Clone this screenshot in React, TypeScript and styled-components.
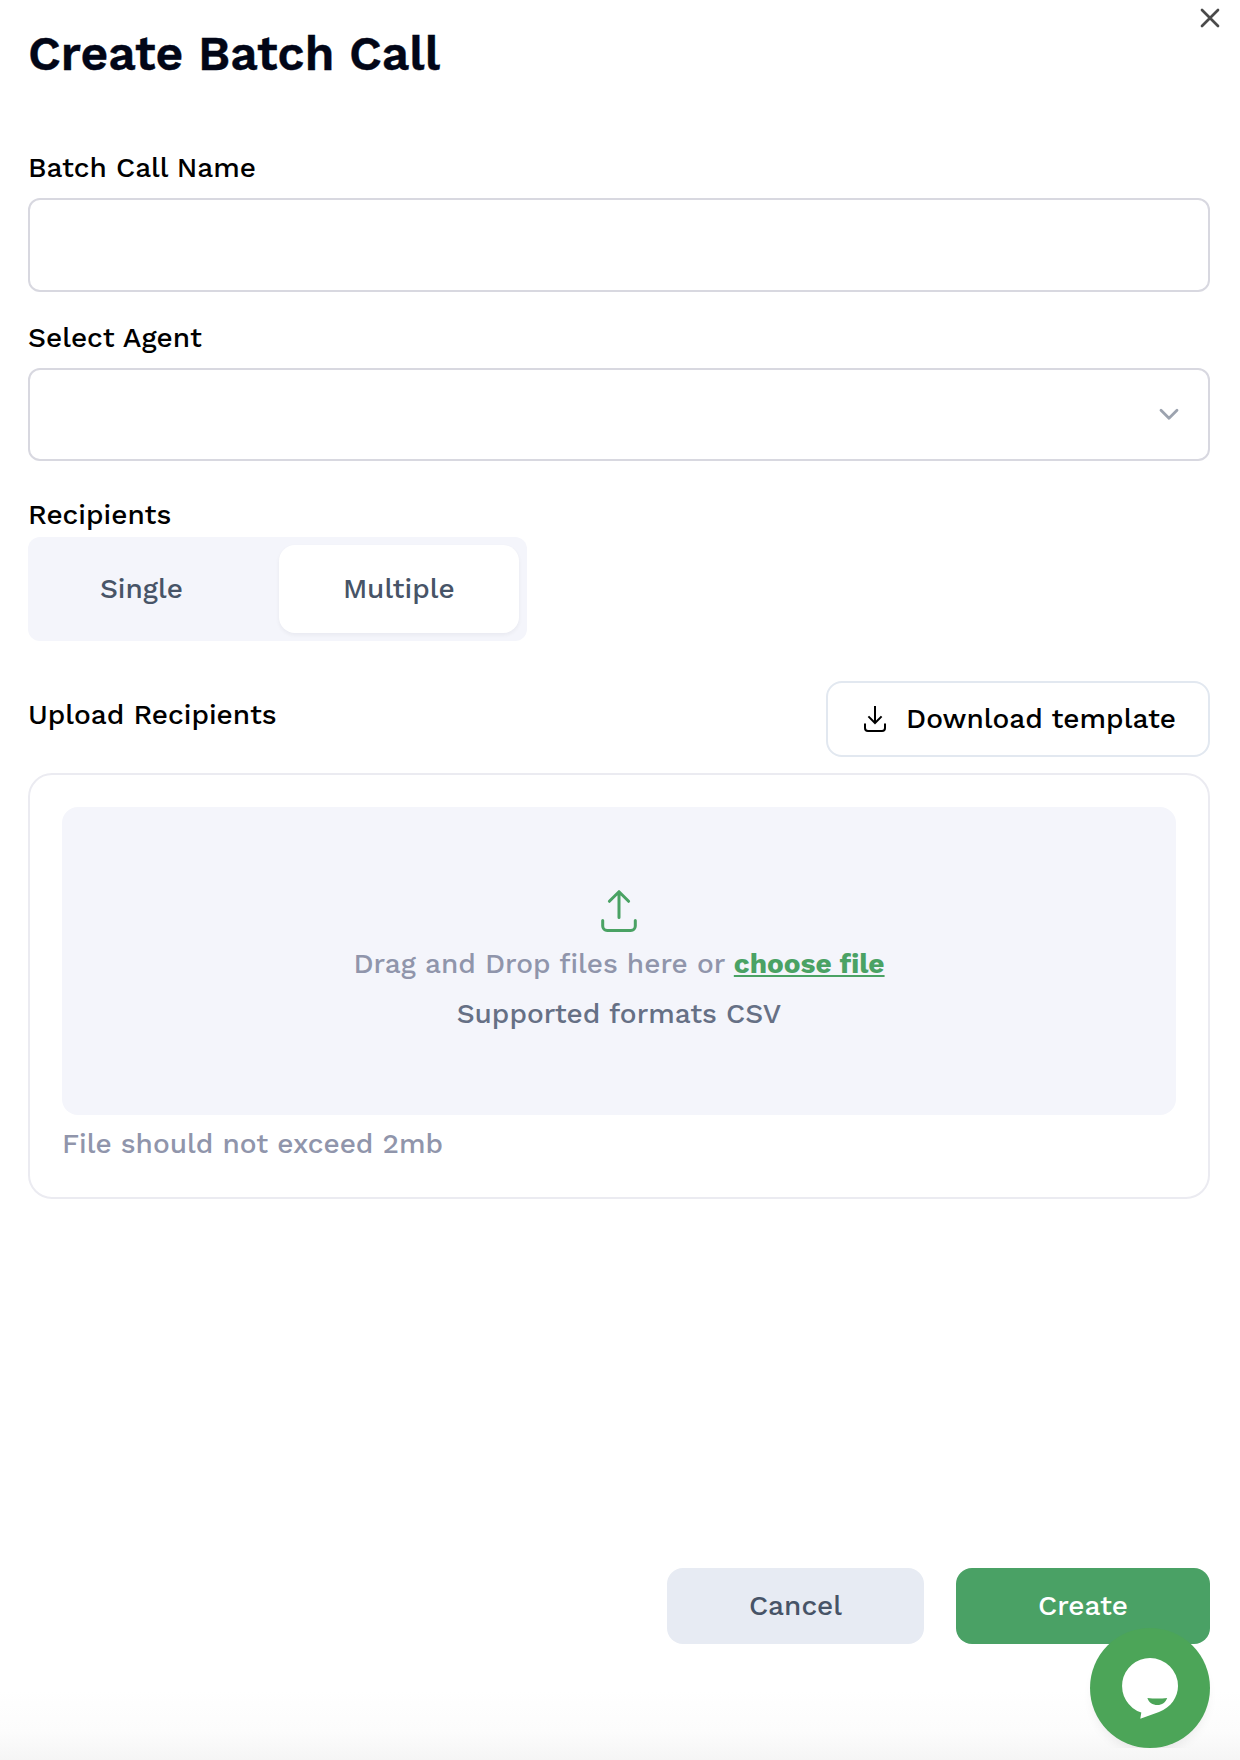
import React, { useState } from "react";
import styled, { createGlobalStyle, css } from "styled-components";

const GlobalStyle = createGlobalStyle`
  *, *::before, *::after { box-sizing: border-box; }
  body {
    margin: 0;
    background: #fff;
    color: #000;
    font-family: "Work Sans", Inter, sans-serif;
    font-size: 28px;
    font-weight: 500;
    line-height: 40px;
  }
  button, input { font: inherit; }
`;

const Panel = styled.main`
  position: relative;
  display: flex;
  flex-direction: column;
  width: 1240px;
  height: 1760px;
  padding: 8px 30px 116px 28px;
  overflow: hidden;
  background: linear-gradient(to bottom, #fff 1690px, #fcfcfc 1732px, #f5f5f5 1760px);
`;

const Header = styled.header`
  display: flex;
  justify-content: space-between;
  align-items: flex-start;
  height: 140px;
`;

const Title = styled.h1`
  margin: 16px 0 0;
  color: #020617;
  font-size: 48px;
  font-weight: 600;
  line-height: 60px;
  -webkit-text-stroke: 0.4px currentColor;
`;

const CloseButton = styled.button`
  display: flex;
  margin: 0 -10px 0 0;
  padding: 0;
  border: 0;
  background: none;
  color: #4a4a4a;
`;

const Field = styled.div<{ $gap: number }>`
  display: flex;
  flex-direction: column;
  gap: ${(p) => p.$gap}px;
`;

const Label = styled.label`
  display: block;
`;

const control = css`
  width: 100%;
  border: 2px solid #d8d8e0;
  border-radius: 12px;
  background: #fff;
`;

const TextInput = styled.input`
  ${control}
  height: 94px;
  padding: 0 28px;
  outline: none;
`;

const SelectBox = styled.button`
  ${control}
  display: flex;
  align-items: center;
  justify-content: flex-end;
  height: 93px;
  padding: 0 26px;
  color: #9ca3af;
`;

const Form = styled.form`
  display: flex;
  flex-direction: column;
`;

const AgentField = styled(Field)`
  margin-top: 26px;
`;

const RecipientsField = styled(Field)`
  margin-top: 34px;
`;

const Tabs = styled.div`
  display: flex;
  gap: 32px;
  width: 499px;
  height: 104px;
  padding: 8px;
  border-radius: 12px;
  background: #f4f5fb;
`;

const Tab = styled.button<{ $active: boolean }>`
  padding: 0 64px;
  border: 0;
  border-radius: 16px;
  color: #475467;
  background: ${(p) => (p.$active ? "#fff" : "transparent")};
  box-shadow: ${(p) => (p.$active ? "0 2px 4px rgba(16, 24, 40, 0.05)" : "none")};
`;

const UploadHeader = styled.div`
  display: flex;
  justify-content: space-between;
  align-items: flex-start;
  margin-top: 40px;
`;

const UploadLabel = styled(Label)`
  margin-top: 14px;
`;

const OutlineButton = styled.button`
  display: flex;
  align-items: center;
  justify-content: center;
  gap: 16px;
  width: 384px;
  height: 76px;
  padding: 0;
  border: 2px solid #e2e8f0;
  border-radius: 16px;
  background: #fff;
  color: #000;
  white-space: nowrap;
`;

const UploadCard = styled.section`
  display: flex;
  flex-direction: column;
  height: 426px;
  margin-top: 16px;
  padding: 32px;
  border: 2px solid #ebebf1;
  border-radius: 24px;
  background: #fff;
`;

const DropZone = styled.div`
  display: flex;
  flex-direction: column;
  align-items: center;
  height: 308px;
  padding-top: 82px;
  border-radius: 16px;
  background: #f4f5fb;
`;

const DropText = styled.p`
  margin: 11px 0 0;
  color: #9095ab;
`;

const ChooseFile = styled.a`
  color: #4aa264;
  font-weight: 700;
  text-decoration: underline;
`;

const Formats = styled.p`
  margin: 10px 0 0;
  color: #667085;
`;

const SizeHint = styled.p`
  margin: 9px 0 0;
  color: #9095ab;
`;

const Footer = styled.footer`
  display: flex;
  justify-content: flex-end;
  gap: 32px;
  margin-top: auto;
`;

const ActionButton = styled.button<{ $primary?: boolean }>`
  width: ${(p) => (p.$primary ? 254 : 257)}px;
  height: 76px;
  padding: 0;
  border: 0;
  border-radius: 16px;
  color: ${(p) => (p.$primary ? "#fff" : "#475467")};
  background: ${(p) => (p.$primary ? "#4aa165" : "#e7ebf3")};
`;

const ChatWidget = styled.div`
  position: absolute;
  right: 0;
  bottom: 12px;
  padding: 20px 30px 0;
  overflow: hidden;
  pointer-events: none;
`;

const ChatButton = styled.button`
  display: block;
  width: 120px;
  height: 120px;
  padding: 0;
  border: 0;
  border-radius: 50%;
  background: #4ca558;
  box-shadow: 0 8px 12px -4px rgba(0, 0, 0, 0.08);
  pointer-events: auto;
`;

const CloseIcon = () => (
  <svg width="20" height="20" viewBox="0 0 20 20" fill="none" stroke="currentColor" strokeWidth="2.7" strokeLinecap="round">
    <path d="M2 2l16 16M18 2L2 18" />
  </svg>
);

const ChevronIcon = () => (
  <svg width="26" height="26" viewBox="0 0 26 26" fill="none" stroke="currentColor" strokeWidth="2.8" strokeLinecap="round" strokeLinejoin="round">
    <path d="M5 8.2l8 8.100 8-8.100" />
  </svg>
);

const DownloadIcon = () => (
  <svg width="30" height="30" viewBox="0 0 30 30" fill="none" stroke="currentColor" strokeWidth="2">
    <path d="M15 2v17.5M8.4 12.4L15 19l6.600-6.600" />
    <path d="M5 19.600V24a3 3 0 0 0 3 3h14a3 3 0 0 0 3-3v-4.400" />
  </svg>
);

const UploadIcon = () => (
  <svg width="40" height="44" viewBox="0 0 40 44" fill="none" stroke="#4aa264" strokeWidth="3" strokeLinecap="round" strokeLinejoin="round">
    <path d="M20 28.500V2.700M10.400 12.300L20 2.700l9.600 9.600" />
    <path d="M3.700 31.400v5.600a4.500 4.500 0 0 0 4.500 4.500h23.600a4.500 4.500 0 0 0 4.500-4.500v-5.600" />
  </svg>
);

const ChatIcon = () => (
  <svg width="120" height="120" viewBox="0 0 120 120">
    <path fill="#fff" d="M60 30a28 28 0 0 1 28 28c0 11-7 21.500-19 26L50.300 90.800 51.300 84.600A28 28 0 0 1 60 30z" />
    <path fill="#4ca558" d="M57.400 70q10 1.200 19.800 0c-1.600 4.600-5.200 7-9.800 7s-8.800-2.600-10-7z" />
  </svg>
);

const modes = ["Single", "Multiple"];

export default function App() {
  const [mode, setMode] = useState("Multiple");
  return (
    <>
      <GlobalStyle />
      <Panel>
        <Header>
          <Title>Create Batch Call</Title>
          <CloseButton type="button" aria-label="Close">
            <CloseIcon />
          </CloseButton>
        </Header>
        <Form>
          <Field $gap={10}>
            <Label htmlFor="batch-name">Batch Call Name</Label>
            <TextInput id="batch-name" />
          </Field>
          <AgentField $gap={10}>
            <Label htmlFor="agent">Select Agent</Label>
            <SelectBox id="agent" type="button">
              <ChevronIcon />
            </SelectBox>
          </AgentField>
          <RecipientsField $gap={2}>
            <Label as="span">Recipients</Label>
            <Tabs>
              {modes.map((m) => (
                <Tab key={m} type="button" $active={m === mode} onClick={() => setMode(m)}>
                  {m}
                </Tab>
              ))}
            </Tabs>
          </RecipientsField>
          <UploadHeader>
            <UploadLabel as="span">Upload Recipients</UploadLabel>
            <OutlineButton type="button">
              <DownloadIcon />
              Download template
            </OutlineButton>
          </UploadHeader>
          <UploadCard>
            <DropZone>
              <UploadIcon />
              <DropText>
                Drag and Drop files here or <ChooseFile>choose file</ChooseFile>
              </DropText>
              <Formats>Supported formats CSV</Formats>
            </DropZone>
            <SizeHint>File should not exceed 2mb</SizeHint>
          </UploadCard>
        </Form>
        <Footer>
          <ActionButton type="button">Cancel</ActionButton>
          <ActionButton type="button" $primary>
            Create
          </ActionButton>
        </Footer>
        <ChatWidget>
          <ChatButton type="button" aria-label="Open chat">
            <ChatIcon />
          </ChatButton>
        </ChatWidget>
      </Panel>
    </>
  );
}
